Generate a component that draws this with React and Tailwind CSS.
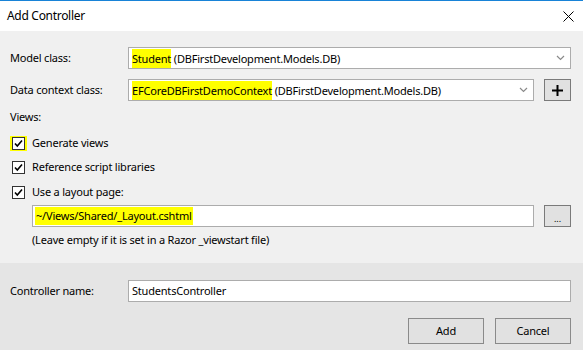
import React from "react";

const Chevron = () => (
  <svg width="9" height="6" viewBox="0 0 9 6" className="mr-[5px]">
    <polyline points="1,1 4.5,4.5 8,1" fill="none" stroke="#8a8a8a" strokeWidth="1.2" />
  </svg>
);

const Check = () => (
  <svg width="13" height="13" viewBox="0 0 13 13">
    <rect x="0.5" y="0.5" width="12" height="12" fill="#fff" stroke="#333" />
    <polyline points="3,6.5 5.3,9 10,3.5" fill="none" stroke="#000" strokeWidth="1.6" />
  </svg>
);

const CheckRow = ({ label, highlight, className }) => (
  <div className={`flex items-center h-[16px] ${className}`}>
    <div className={`w-[17px] h-[15px] flex items-center justify-center ${highlight ? "bg-[#ffff00]" : ""}`}>
      <Check />
    </div>
    <span className="ml-[5px]">{label}</span>
  </div>
);

const SmallButton = ({ children }) => (
  <div className="w-[27px] h-[22px] ml-[10px] bg-[#e1e1e1] border border-[#7a7a7a] flex items-center justify-center">
    {children}
  </div>
);

export default function App() {
  return (
    <div className="w-[583px] h-[350px] flex flex-col font-['Segoe_UI','Noto_Sans',sans-serif] text-[11px] tracking-[-0.2px] text-black">
      {/* title bar */}
      <div className="h-[31px] bg-white border-t border-[#1883d7] flex items-center justify-between pl-[7px] pr-[9px]">
        <span className="text-[12px] tracking-[-0.3px]">Add Controller</span>
        <svg width="11" height="11" viewBox="0 0 11 11">
          <path d="M0.5 0.5 L10.5 10.5 M10.5 0.5 L0.5 10.5" stroke="#000" strokeWidth="1" />
        </svg>
      </div>

      {/* body */}
      <div className="flex-1 bg-[#f0f0f0] pl-[10px] pr-[12px] pt-[16px] flex flex-col">
        <div className="flex items-center h-[22px]">
          <span className="w-[118px]">Model class:</span>
          <div className="flex-1 h-full bg-white border border-[#acacac] flex items-center justify-between pl-[3px]">
            <span>
              <span className="inline-block bg-[#ffff00] leading-[19px]">Student</span> (DBFirstDevelopment.Models.DB)
            </span>
            <Chevron />
          </div>
        </div>

        <div className="flex items-center h-[22px] mt-[10px]">
          <span className="w-[118px]">Data context class:</span>
          <div className="flex-1 h-full bg-white border border-[#acacac] flex items-center justify-between pl-[3px]">
            <span>
              <span className="inline-block bg-[#ffff00] leading-[19px]">EFCoreDBFirstDemoContext</span> (DBFirstDevelopment.Models.DB)
            </span>
            <Chevron />
          </div>
          <SmallButton>
            <svg width="11" height="11" viewBox="0 0 11 11">
              <path d="M5.5 0 V11 M0 5.5 H11" stroke="#000" strokeWidth="2" />
            </svg>
          </SmallButton>
        </div>

        <div className="h-[16px] mt-[8px] flex items-center">Views:</div>

        <CheckRow label="Generate views" highlight className="mt-[10px]" />
        <CheckRow label="Reference script libraries" className="mt-[8px]" />
        <CheckRow label="Use a layout page:" className="mt-[9px]" />

        <div className="flex items-center h-[22px] mt-[5px] ml-[22px]">
          <div className="flex-1 h-full bg-white border border-[#acacac] flex items-center pl-[2px]">
            <span className="inline-block bg-[#ffff00] leading-[18px] px-[1px]">~/Views/Shared/_Layout.cshtml</span>
          </div>
          <SmallButton>
            <span className="text-[9px] leading-none mt-[4px] tracking-[0px]">...</span>
          </SmallButton>
        </div>

        <div className="h-[16px] mt-[5px] ml-[22px] flex items-center">
          (Leave empty if it is set in a Razor _viewstart file)
        </div>
      </div>

      {/* footer */}
      <div className="h-[87px] bg-[#e5e5e5] pl-[10px] pr-[12px] pt-[17px] flex flex-col">
        <div className="flex items-center h-[22px]">
          <span className="w-[118px]">Controller name:</span>
          <div className="flex-1 h-full bg-white border border-[#acacac] flex items-center pl-[3px]">
            StudentsController
          </div>
        </div>
        <div className="flex justify-end gap-[11px] mt-[16px]">
          <div className="w-[76px] h-[26px] bg-[#e1e1e1] border border-[#8a8a8a] flex items-center justify-center">Add</div>
          <div className="w-[76px] h-[26px] bg-[#e1e1e1] border border-[#8a8a8a] flex items-center justify-center">Cancel</div>
        </div>
      </div>
    </div>
  );
}
